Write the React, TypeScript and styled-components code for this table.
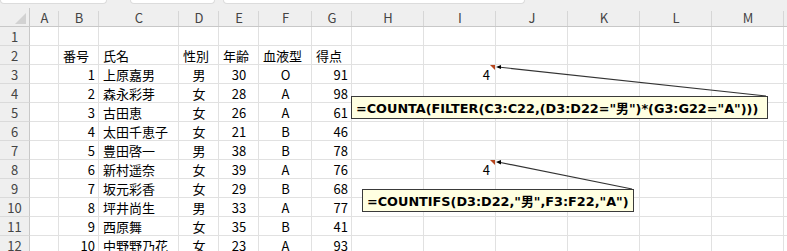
import React from "react";
import styled, { createGlobalStyle, css } from "styled-components";

const GlobalStyle = createGlobalStyle`
  html, body { margin: 0; padding: 0; background: #ffffff; overflow: hidden; }
  body { font-family: "Noto Sans CJK JP", "Noto Sans", sans-serif; }
`;

const FONT = `"Noto Sans CJK JP", "Noto Sans", sans-serif`;
const CALLOUT_FONT = `"DejaVu Sans", "Noto Sans CJK JP", sans-serif`;

const Sheet = styled.div`
  position: relative;
  width: 787px;
  height: 251px;
  overflow: hidden;
  background: #ffffff;
`;

const TopStrip = styled.div`
  height: 8px;
  background: #efefef;
  display: flex;
  align-items: flex-start;
`;

const Tab = styled.div<{ $w: number; $gap: number }>`
  width: ${(p) => p.$w}px;
  margin-left: ${(p) => p.$gap}px;
  height: 3px;
  background: #ffffff;
  border: 1px solid #dcdcdc;
  border-top: none;
  border-radius: 0 0 4px 4px;
`;

const Grid = styled.div`
  display: grid;
  grid-template-columns: 30px 29px 40px 80px 40px 40px 53px 40px 72px 72px 72px 72px 72px 72px 1fr;
  grid-auto-rows: 19px;
`;

const HeaderBase = css`
  background: #efefef;
  color: #444444;
  font-family: ${FONT};
  font-size: 13px;
  display: flex;
  align-items: center;
  justify-content: center;
  box-sizing: border-box;
`;

const Corner = styled.div`
  ${HeaderBase};
  position: relative;
  border-right: 1px solid #c8c8c8;
  border-bottom: 1px solid #c8c8c8;
  &::after {
    content: "";
    position: absolute;
    right: 3px;
    bottom: 2px;
    width: 0;
    height: 0;
    border-left: 11px solid transparent;
    border-bottom: 11px solid #d2d2d2;
  }
`;

const ColHeader = styled.div`
  ${HeaderBase};
  border-bottom: 1px solid #c8c8c8;
  position: relative;
  &::after {
    content: "";
    position: absolute;
    right: 0;
    top: 3px;
    bottom: 0;
    border-right: 1px solid #d6d6d6;
  }
`;

const RowHeader = styled.div`
  ${HeaderBase};
  border-right: 1px solid #c8c8c8;
  border-bottom: 1px solid #dadada;
`;

type Align = "left" | "right" | "center";

const Cell = styled.div<{ $align: Align; $marker?: boolean }>`
  position: relative;
  box-sizing: border-box;
  border-right: 1px solid #e1e1e1;
  border-bottom: 1px solid #e1e1e1;
  padding: 0 3px 0 4px;
  font-family: ${FONT};
  font-size: 13px;
  color: #000000;
  display: flex;
  align-items: center;
  white-space: nowrap;
  overflow: visible;
  justify-content: ${(p) =>
    p.$align === "left" ? "flex-start" : p.$align === "right" ? "flex-end" : "center"};
  ${(p) =>
    p.$marker &&
    css`
      padding-right: 5px;
      &::after {
        content: "";
        position: absolute;
        right: 0;
        top: 0;
        width: 0;
        height: 0;
        border-left: 5px solid transparent;
        border-top: 5px solid #b8461e;
      }
    `}
`;

const Callout = styled.div<{ $left: number; $top: number; $width: number }>`
  position: absolute;
  left: ${(p) => p.$left}px;
  top: ${(p) => p.$top}px;
  width: ${(p) => p.$width}px;
  height: 23px;
  box-sizing: border-box;
  background: #ffffe1;
  border: 1px solid #3a3a3a;
  font-family: ${CALLOUT_FONT};
  font-weight: 700;
  font-size: 12.8px;
  color: #000000;
  display: flex;
  align-items: center;
  padding-left: 4px;
  white-space: nowrap;
`;

const Overlay = styled.svg`
  position: absolute;
  left: 0;
  top: 0;
  pointer-events: none;
`;

const COLS = ["A", "B", "C", "D", "E", "F", "G", "H", "I", "J", "K", "L", "M", ""];

type CellDef = { v: string; a: Align; m?: boolean };

const people: [number, string, string, number, string, number][] = [
  [1, "上原嘉男", "男", 30, "O", 91],
  [2, "森永彩芽", "女", 28, "A", 98],
  [3, "古田恵", "女", 26, "A", 61],
  [4, "太田千恵子", "女", 21, "B", 46],
  [5, "豊田啓一", "男", 38, "B", 78],
  [6, "新村遥奈", "女", 39, "A", 76],
  [7, "坂元彩香", "女", 29, "B", 68],
  [8, "坪井尚生", "男", 33, "A", 77],
  [9, "西原舞", "女", 35, "B", 41],
  [10, "中野野乃花", "女", 23, "A", 93],
];

function buildRow(r: number): Record<string, CellDef> {
  const row: Record<string, CellDef> = {};
  if (r === 2) {
    ["番号", "氏名", "性別", "年齢", "血液型", "得点"].forEach((t, i) => {
      row["BCDEFG"[i]] = { v: t, a: "left" };
    });
  }
  const p = people[r - 3];
  if (p) {
    row.B = { v: String(p[0]), a: "right" };
    row.C = { v: p[1], a: "left" };
    row.D = { v: p[2], a: "center" };
    row.E = { v: String(p[3]), a: "center" };
    row.F = { v: p[4], a: "center" };
    row.G = { v: String(p[5]), a: "right" };
  }
  if (r === 3 || r === 8) row.I = { v: "4", a: "right", m: true };
  return row;
}

export default function App() {
  const rows = Array.from({ length: 12 }, (_, i) => i + 1);
  return (
    <Sheet>
      <GlobalStyle />
      <TopStrip>
        <Tab $w={105} $gap={0} />
        <Tab $w={83} $gap={23} />
        <Tab $w={300} $gap={8} />
      </TopStrip>
      <Grid>
        <Corner />
        {COLS.map((c, i) => (
          <ColHeader key={"h" + i}>{c}</ColHeader>
        ))}
        {rows.map((r) => {
          const data = buildRow(r);
          return (
            <React.Fragment key={r}>
              <RowHeader>{r}</RowHeader>
              {COLS.map((c, i) => {
                const d = data[c];
                return (
                  <Cell key={r + "-" + i} $align={d ? d.a : "left"} $marker={d?.m}>
                    {d ? d.v : ""}
                  </Cell>
                );
              })}
            </React.Fragment>
          );
        })}
      </Grid>
      <Overlay width={787} height={251} viewBox="0 0 787 251">
        <line x1={498} y1={67} x2={766} y2={96} stroke="#333" strokeWidth={1.2} />
        <polygon points="496,67 501,65 501,69" fill="#000" />
        <line x1={498} y1={162} x2={632} y2={189} stroke="#333" strokeWidth={1.2} />
        <polygon points="496,162 501,160 501,164.5" fill="#000" />
      </Overlay>
      <Callout $left={351} $top={96} $width={417}>
        =COUNTA(FILTER(C3:C22,(D3:D22="男")*(G3:G22="A")))
      </Callout>
      <Callout $left={362} $top={189} $width={272}>
        =COUNTIFS(D3:D22,"男",F3:F22,"A")
      </Callout>
    </Sheet>
  );
}
